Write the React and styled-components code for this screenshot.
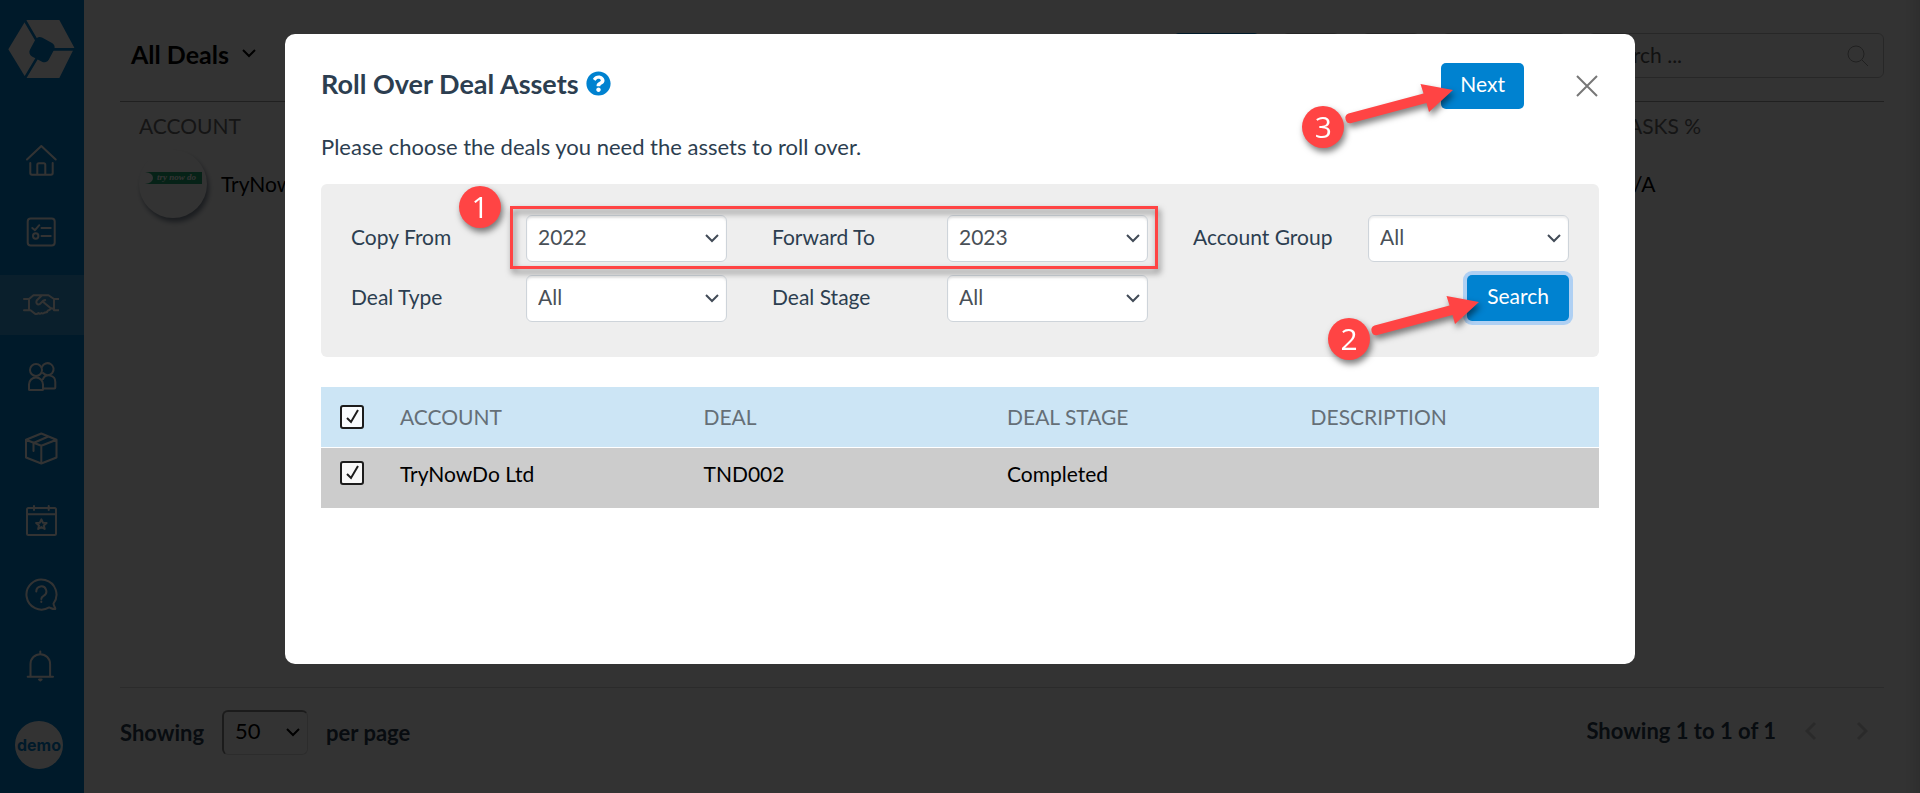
import React from "react";
import styled, { createGlobalStyle, css } from "styled-components";
import { FaQuestionCircle } from "react-icons/fa";

const blue = "#0082d0";
const red = "#ff4444";
const sans = `Lato, "Noto Sans", sans-serif`;

const GlobalStyle = createGlobalStyle`
  *, *::before, *::after { box-sizing: border-box; }
  body { margin: 0; background: #fff; color: #000; font: 400 21px/26px ${sans}; }
  button, input, select { font: inherit; margin: 0; }
  h1, h2, p { margin: 0; }
`;

/* ---------- page ---------- */

const Page = styled.div`
  display: flex;
  min-height: 100vh;
`;

const Sidebar = styled.aside`
  display: flex;
  flex-direction: column;
  flex: none;
  width: 84px;
  padding: 10px 0 24px;
  background: ${blue};
  color: #fff;
`;

const Nav = styled.nav`
  display: flex;
  flex: 1;
  flex-direction: column;
  justify-content: space-between;
  margin: 40px 0 24px;
`;

const NavLink = styled.a`
  display: flex;
  align-items: center;
  justify-content: center;
  height: 60px;
  padding-right: 2px;
  color: inherit;
  background: ${(p) => (p.$active ? "rgba(255, 255, 255, 0.2)" : "transparent")};
`;

const LineIcon = styled.svg.attrs({ viewBox: "0 0 36 36", "aria-hidden": true })`
  width: 36px;
  height: 36px;
  fill: none;
  stroke: currentColor;
  stroke-width: 2;
  stroke-linecap: round;
  stroke-linejoin: round;
`;

const UserAvatar = styled.a`
  display: flex;
  align-items: center;
  justify-content: center;
  width: 48px;
  height: 48px;
  margin-left: 15px;
  border-radius: 50%;
  background: #fff;
  color: ${blue};
  font: 700 16px/20px Inter, sans-serif;
  text-decoration: none;
`;

const Main = styled.main`
  display: flex;
  flex: 1;
  flex-direction: column;
  min-width: 0;
  padding: 0 36px;
  box-shadow: inset -20px 0 14px -14px rgba(0, 0, 0, 0.12);
`;

const TopBar = styled.header`
  display: flex;
  align-items: center;
  gap: 22px;
  height: 102px;
  padding: 10px 0 0 11px;
  border-bottom: 1px solid #a0a0a0;
`;

const ViewButton = styled.button`
  display: flex;
  align-items: center;
  gap: 13px;
  margin-right: auto;
  padding: 0 0 4px;
  border: 0;
  background: none;
  color: #000;
  font-size: 25px;
  font-weight: 700;
`;

const Chevron = styled.svg.attrs({ viewBox: "0 0 14 9", "aria-hidden": true })`
  width: 14px;
  height: 9px;
  fill: none;
  stroke: currentColor;
  stroke-width: 2;
`;

const ToolSlot = styled.span`
  width: ${(p) => p.$width};
  height: 45px;
  border: 1px solid ${(p) => (p.$primary ? blue : "#c4c4c4")};
  border-radius: 6px;
  background: ${(p) => (p.$primary ? blue : "#fff")};
`;

const SearchField = styled.label`
  display: flex;
  align-items: center;
  width: 296px;
  height: 45px;
  padding: 0 14px 0 11px;
  border: 1px solid #c4c4c4;
  border-radius: 6px;
  color: #a0a0a0;
`;

const SearchInput = styled.input`
  flex: 1;
  min-width: 0;
  padding: 0 0 2px;
  border: 0;
  outline: 0;
  background: none;
  font-size: 21px;
  &::placeholder { color: #555; opacity: 1; }
`;

const DealsTable = styled.table`
  width: 100%;
  border-collapse: collapse;
  table-layout: fixed;
  text-align: left;

  th {
    height: 48px;
    padding: 0 19px;
    color: #6c6c6c;
    font-weight: 400;
  }
  td {
    height: 68px;
    padding: 0 19px;
  }
  th:last-child, td:last-child {
    width: 286px;
  }
`;

const AccountCell = styled.div`
  display: flex;
  align-items: center;
  gap: 14px;
`;

const AccountLogo = styled.svg.attrs({ viewBox: "0 0 68 68", role: "img", "aria-label": "try now do" })`
  width: 68px;
  height: 68px;
  border-radius: 50%;
  box-shadow: 2px 4px 5px rgba(10, 30, 60, 0.5);
`;

const Footer = styled.footer`
  display: flex;
  align-items: center;
  height: 106px;
  margin-top: auto;
  padding-bottom: 16px;
  border-top: 1px solid #d5d5d5;
  color: #2c3e50;
  font-size: 22px;
  font-weight: 700;
`;

const PageSize = styled.label`
  display: flex;
  align-items: center;
  gap: 18px;
  margin-right: auto;
`;

const PagerButton = styled.button`
  display: flex;
  justify-content: center;
  width: 51px;
  padding: 0;
  border: 0;
  background: none;
  color: #d0d0d0;
`;

const PagerIcon = styled.svg.attrs({ viewBox: "0 0 12 20", "aria-hidden": true })`
  width: 12px;
  height: 20px;
  fill: none;
  stroke: currentColor;
  stroke-width: 3;
`;

const Pager = styled.div`
  display: flex;
  align-items: center;
  margin-right: -3px;
  padding-bottom: 4px;
`;

const PagerText = styled.span`
  margin-right: 9px;
`;

/* ---------- shared controls ---------- */

const SelectWrap = styled.span`
  display: grid;
  align-items: center;
  width: ${(p) => (p.$compact ? "86px" : "201px")};

  > * { grid-area: 1 / 1; }
  > svg {
    justify-self: end;
    margin-right: 8px;
    color: ${(p) => (p.$compact ? "#000" : "#424b57")};
    pointer-events: none;
  }
`;

const SelectBox = styled.select`
  width: 100%;
  height: 47px;
  padding: 0 30px 4px 11px;
  appearance: none;
  border: 1px solid #ced4da;
  border-radius: 6px;
  background: #fff;
  box-shadow: inset 0 2px 2px rgba(0, 0, 0, 0.07);
  color: #495057;

  ${(p) => p.$compact && css`
    height: 45px;
    border-width: 2px 1px 1px 2px;
    border-color: #888 #ddd #ddd #888;
    box-shadow: none;
    color: #000;
    font-weight: 400;
  `}
`;

const Button = styled.button`
  height: 46px;
  padding: 0 ${(p) => (p.$wide ? "20px" : "19px")} 4px;
  border: 0;
  border-radius: 5px;
  background: ${blue};
  color: #fff;
  box-shadow: ${(p) => (p.$focused ? "0 0 0 4px #afd0f3" : "none")};
`;

const CheckWrap = styled.span`
  display: grid;
  width: 24px;
  height: 24px;
  > * { grid-area: 1 / 1; }
  > svg { pointer-events: none; }
`;

const CheckInput = styled.input`
  width: 24px;
  height: 24px;
  appearance: none;
  border: 2px solid #1c1c1c;
  border-radius: 3px;
  background: rgba(255, 255, 255, 0.88);
`;

const CheckMark = styled.svg.attrs({ viewBox: "0 0 24 24", "aria-hidden": true })`
  width: 24px;
  height: 24px;
  fill: none;
  stroke: #1c1c1c;
  stroke-width: 2;
`;

/* ---------- dialog ---------- */

const Overlay = styled.div`
  position: fixed;
  inset: 0;
  display: flex;
  align-items: flex-start;
  justify-content: center;
  padding: 34px 32px;
  overflow: auto;
  background: rgba(0, 0, 0, 0.8);
`;

const Dialog = styled.section`
  width: 100%;
  max-width: 1350px;
  min-height: 630px;
  padding: 29px 36px 36px;
  border-radius: 10px;
  background: #fff;
  color: #2c3e50;
`;

const DialogHeader = styled.header`
  display: flex;
  align-items: center;
  height: 46px;
`;

const DialogTitle = styled.h2`
  display: flex;
  align-items: center;
  gap: 7px;
  margin-right: auto;
  padding-bottom: 5px;
  font-size: 27px;
  line-height: 32px;
`;

const HelpIcon = styled(FaQuestionCircle)`
  width: 25px;
  height: 25px;
  color: ${blue};
`;

const CloseButton = styled.button`
  margin: 0 0 0 51px;
  padding: 0;
  border: 0;
  background: none;
  color: #777;
`;

const CloseIcon = styled.svg.attrs({ viewBox: "0 0 24 24", "aria-hidden": true })`
  display: block;
  width: 24px;
  height: 24px;
  stroke: currentColor;
  stroke-width: 2;
`;

const Intro = styled.p`
  margin: 25px 0 24px;
  font-size: 22px;
`;

const Filters = styled.form`
  position: relative;
  display: grid;
  grid-template-columns: repeat(3, 1fr);
  gap: 13px 45px;
  padding: 31px 30px 35px;
  border-radius: 6px;
  background: #eee;
`;

const Field = styled.label`
  display: flex;
  align-items: center;
  justify-content: space-between;
`;

const FieldText = styled.span`
  padding-bottom: 4px;
`;

const AssetTable = styled.table`
  width: 100%;
  margin-top: 30px;
  border-collapse: collapse;
  table-layout: fixed;
  text-align: left;

  th {
    height: 60px;
    padding: 0;
    background: #cce5f5;
    color: #656f77;
    font-weight: 400;
  }
  td {
    height: 61px;
    padding: 13px 0 0;
    border-top: 1px solid #fff;
    background: #ccc;
    color: #000;
    vertical-align: top;
  }
  th:first-child, td:first-child {
    padding-left: 19px;
  }
`;

const Col = styled.col`
  width: ${(p) => p.$width};
`;

/* ---------- callouts ---------- */

const Anchor = styled.span`
  position: relative;
  justify-self: end;
`;

const lifted = css`
  filter: drop-shadow(2px 4px 3px rgba(0, 0, 0, 0.5));
  pointer-events: none;
`;

const Callout = styled.span`
  position: absolute;
  top: 19px;
  left: -139px;
  display: flex;
  align-items: flex-end;
  ${lifted}
`;

const Badge = styled.span`
  display: flex;
  flex: none;
  align-items: center;
  justify-content: center;
  width: 42px;
  height: 42px;
  border-radius: 50%;
  background: ${red};
  color: #fff;
  font: 500 30px/30px "Open Sans", sans-serif;
`;

const ArrowShape = styled.svg.attrs({ viewBox: "42 0 112 66", "aria-hidden": true })`
  width: 112px;
  height: 66px;
  fill: ${red};
`;

const Highlight = styled.span`
  position: absolute;
  top: 22px;
  left: 189px;
  width: 648px;
  height: 63px;
  border: 3px solid ${red};
  ${lifted}
`;

const StepOne = styled(Badge)`
  position: absolute;
  top: 2px;
  left: 138px;
  ${lifted}
`;

function Down() {
  return <Chevron><path d="M1 1l6 6 6-6" /></Chevron>;
}

function Select({ options, compact }) {
  return (
    <SelectWrap $compact={compact}>
      <SelectBox $compact={compact}>
        {options.map((o) => <option key={o}>{o}</option>)}
      </SelectBox>
      <Down />
    </SelectWrap>
  );
}

function Check({ label }) {
  return (
    <CheckWrap>
      <CheckInput type="checkbox" defaultChecked aria-label={label} />
      <CheckMark><path d="M7 13l4 4 7-12" /></CheckMark>
    </CheckWrap>
  );
}

function Step({ number }) {
  return (
    <Callout>
      <Badge>{number}</Badge>
      <ArrowShape>
        <path d="M46.5 31.5L121.500 11.500L118.500 2L151 8L127 30L124.500 21L49.500 41A5 5 0 0 1 46.500 31.500Z" />
      </ArrowShape>
    </Callout>
  );
}

const Logo = styled.svg.attrs({ viewBox: "0 0 252 240", role: "img", "aria-label": "Home" })`
  width: 84px;
  height: 80px;
`;

const navItems = [
  { label: "Home", icon: <LineIcon><path d="M4 17.500L18.300 4l14.400 13.500M7.300 21v10q0 1.700 1.700 1.700h19q1.700 0 1.700-1.700V21M14.300 32.500V22.800q0-1.500 1.500-1.500h5q1.500 0 1.500 1.500v9.700" /></LineIcon> },
  { label: "Tasks", icon: <LineIcon><rect x="4.700" y="4.500" width="27" height="27" rx="3" /><path d="M9.300 14l2.700 2.200 4.300-5M18.500 14h9.200M18.500 22h9.200" /><circle cx="12.700" cy="22" r="2.700" /></LineIcon> },
  { label: "Deals", icon: <LineIcon><path d="M1 12h5l4.500-3.800h15L31 12h4.500M1 23.200h5M31 23.200h4.500M6 12v11.200M31 12v11.200M6 23.200h1.500l4.500 3.600q2 .8 3.500-.8 1.300 1.500 3 0 1.700 1.200 3.300-.6 2.500.4 3.200-2 2.300-.2 2.500-2.200M31 22l-3.500-1-7.300-6M19 8.300l-5.300 5.200q-1 3.300 1.500 4 1.700 0 2.800-1.600l2.200-2.200 2-.7" /></LineIcon>, active: true },
  { label: "Accounts", icon: <LineIcon><circle cx="13" cy="11" r="6" /><path d="M19 8a6 6 0 1 1 1 6M6 30.500v-5a7 7 0 0 1 14 0v5q0 .500-.700.500H6.700q-.700 0-.700-.500zM20 20a6.500 6.500 0 0 1 12.300 3v5.500q0 1-1 1H20" /></LineIcon> },
  { label: "Assets", icon: <LineIcon><path d="M18.300 1.500l15.200 6.200v17.800l-15.200 6L3 25.500V7.700zM3 7.700l15.300 6 15.200-6M18.300 13.700v17.500M10.500 19v-8l14.800-6.500" /></LineIcon> },
  { label: "Calendar", icon: <LineIcon><rect x="4" y="4" width="29" height="27" rx="1.500" /><path d="M4 10.300h29M11 2v4M25.700 2v4M18.400 15.300l1.500 3.400 3.700.3-2.800 2.400.9 3.600-3.300-1.900-3.200 1.900.8-3.600-2.800-2.400 3.700-.3z" /></LineIcon> },
  { label: "Help", icon: <LineIcon><path d="M30.500 26.500a15 15 0 1 0-4.300 3.900c2 .8 3.500 1.900 6 1.700.8-.8-1.600-2.600-1.700-5.600zM13.300 14.500a5 5 0 1 1 7.300 4.300q-2.300 1.400-2.300 3.200M18.300 24.600v.5" /></LineIcon> },
  { label: "Notifications", icon: <LineIcon><path d="M17.300 2.500v2M4.700 27.700H30M7.500 27.500V15a9.800 9.800 0 0 1 19.600 0v12.500M16 30.500h2.600l-1.300 1z" /></LineIcon> },
];

export default function App() {
  return (
    <>
      <GlobalStyle />
      <Page>
        <Sidebar>
          <Logo>
            <path fill="#fff" d="M80 30h98l45 83-45 91H80l-6-6-49-80 48-80z" />
            <path fill="none" stroke={blue} strokeWidth="8" d="M126 119L74 30M126 118h100M126 119L74 206" />
            <rect x="94" y="87" width="64" height="64" rx="15" fill={blue} transform="rotate(28 126 119)" />
          </Logo>
          <Nav>
            {navItems.map((n) => (
              <NavLink key={n.label} href="#" aria-label={n.label} $active={n.active}>{n.icon}</NavLink>
            ))}
          </Nav>
          <UserAvatar href="#">demo</UserAvatar>
        </Sidebar>
        <Main>
          <TopBar>
            <ViewButton>All Deals <Down /></ViewButton>
            <ToolSlot $width="87px" $primary />
            <ToolSlot $width="58px" />
            <ToolSlot $width="58px" />
            <ToolSlot $width="124px" />
            <SearchField>
              <SearchInput type="text" placeholder="Search ..." aria-label="Search" />
              <svg width="22" height="22" viewBox="0 0 22 22" fill="none" stroke="currentColor" aria-hidden="true">
                <circle cx="9" cy="9" r="8" /><path d="M15 15l6 6" />
              </svg>
            </SearchField>
          </TopBar>
          <DealsTable>
            <thead>
              <tr><th>ACCOUNT</th><th>TASKS %</th></tr>
            </thead>
            <tbody>
              <tr>
                <td>
                  <AccountCell>
                    <AccountLogo>
                      <path fill="#21ab72" d="M6 22h57v12H6q8-1 8-6t-8-6z" />
                      <text x="18" y="30" fill="#fff" fontFamily="Liberation Serif, serif" fontSize="9" fontWeight="700" fontStyle="italic">try now do</text>
                    </AccountLogo>
                    TryNowDo Ltd
                  </AccountCell>
                </td>
                <td>N/A</td>
              </tr>
            </tbody>
          </DealsTable>
          <Footer>
            <PageSize>
              Showing
              <Select options={["50"]} compact />
              per page
            </PageSize>
            <Pager>
              <PagerText>Showing 1 to 1 of 1</PagerText>
              <PagerButton aria-label="Previous page"><PagerIcon><path d="M10 2l-8 8 8 8" /></PagerIcon></PagerButton>
              <PagerButton aria-label="Next page"><PagerIcon><path d="M2 2l8 8-8 8" /></PagerIcon></PagerButton>
            </Pager>
          </Footer>
        </Main>
      </Page>
      <Overlay>
        <Dialog role="dialog" aria-modal="true" aria-labelledby="dialog-title">
          <DialogHeader>
            <DialogTitle id="dialog-title">Roll Over Deal Assets <HelpIcon aria-hidden /></DialogTitle>
            <Anchor>
              <Button type="button">Next</Button>
              <Step number={3} />
            </Anchor>
            <CloseButton aria-label="Close"><CloseIcon><path d="M2 2l20 20M22 2L2 22" /></CloseIcon></CloseButton>
          </DialogHeader>
          <Intro>Please choose the deals you need the assets to roll over.</Intro>
          <Filters>
            <Field><FieldText>Copy From</FieldText><Select options={["2022"]} /></Field>
            <Field><FieldText>Forward To</FieldText><Select options={["2023"]} /></Field>
            <Field><FieldText>Account Group</FieldText><Select options={["All"]} /></Field>
            <Field><FieldText>Deal Type</FieldText><Select options={["All"]} /></Field>
            <Field><FieldText>Deal Stage</FieldText><Select options={["All"]} /></Field>
            <Anchor>
              <Button type="button" $wide $focused>Search</Button>
              <Step number={2} />
            </Anchor>
            <Highlight />
            <StepOne>1</StepOne>
          </Filters>
          <AssetTable>
            <colgroup>
              <Col $width="79px" />
              <Col $width="23.750%" />
              <Col $width="23.750%" />
              <Col $width="23.750%" />
              <Col />
            </colgroup>
            <thead>
              <tr>
                <th><Check label="Select all deals" /></th>
                <th>ACCOUNT</th><th>DEAL</th><th>DEAL STAGE</th><th>DESCRIPTION</th>
              </tr>
            </thead>
            <tbody>
              <tr>
                <td><Check label="Select TND002" /></td>
                <td>TryNowDo Ltd</td><td>TND002</td><td>Completed</td><td />
              </tr>
            </tbody>
          </AssetTable>
        </Dialog>
      </Overlay>
    </>
  );
}
